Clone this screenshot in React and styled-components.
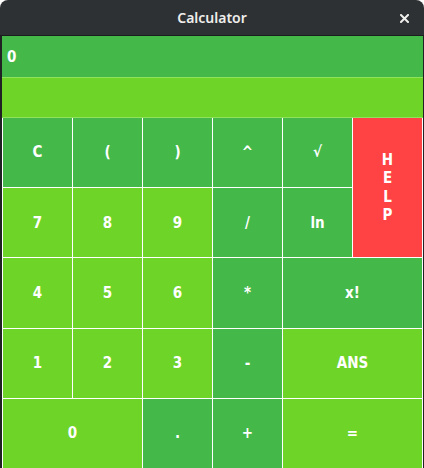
import React from 'react';
import styled, { createGlobalStyle } from 'styled-components';

const GlobalStyle = createGlobalStyle`
  html, body {
    margin: 0;
    padding: 0;
    background: #ffffff;
  }
`;

const DARK = '#44b94a';
const LIGHT = '#6fd428';
const RED = '#ff4244';

const Window = styled.div`
  width: 424px;
  height: 468px;
  display: flex;
  flex-direction: column;
  overflow: hidden;
  border-radius: 8px 8px 0 0;
  font-family: 'DejaVu Sans Condensed', 'DejaVu Sans', sans-serif;
`;

const TitleBar = styled.div`
  height: 35px;
  flex: none;
  background: #2e3134;
  border-bottom: 1px solid #1a1c1d;
  display: flex;
  align-items: center;
  justify-content: center;
  position: relative;
  color: #eeeeec;
  font-family: 'Noto Sans', 'DejaVu Sans', sans-serif;
  font-weight: 600;
  font-size: 14px;
`;

const CloseButton = styled.button`
  position: absolute;
  right: 15px;
  top: 14px;
  width: 9px;
  height: 9px;
  padding: 0;
  border: none;
  background: transparent;
  display: flex;
`;

const Body = styled.div`
  flex: 1;
  display: flex;
  flex-direction: column;
  border-left: 2px solid #1f2122;
  border-right: 1px solid #1f2122;
`;

const DisplayRow = styled.div`
  height: ${p => p.h}px;
  flex: none;
  background: ${p => p.bg};
  border-bottom: 1px solid #8fe35c;
  display: flex;
  align-items: center;
  padding-left: 5px;
  color: #ffffff;
  font-weight: 700;
  font-size: 15px;
`;

const Keypad = styled.div`
  flex: 1;
  display: grid;
  grid-template-columns: repeat(6, 1fr);
  grid-template-rows: repeat(5, 1fr);
  gap: 1px;
  padding: 0 1px;
  background: #ffffff;
`;

const Key = styled.button`
  border: none;
  margin: 0;
  padding: 0;
  background: ${p => p.bg};
  color: #ffffff;
  font-family: 'DejaVu Sans Condensed', 'DejaVu Sans', sans-serif;
  font-weight: 700;
  font-size: 15px;
  line-height: 18.5px;
  grid-column: span ${p => p.cols || 1};
  grid-row: span ${p => p.rows || 1};
  white-space: pre-line;
  display: flex;
  align-items: center;
  justify-content: center;
  cursor: pointer;
`;

const keys = [
  { l: 'C', bg: DARK }, { l: '(', bg: DARK }, { l: ')', bg: DARK },
  { l: '^', bg: DARK }, { l: '√', bg: DARK }, { l: 'H\nE\nL\nP', bg: RED, rows: 2 },
  { l: '7', bg: LIGHT }, { l: '8', bg: LIGHT }, { l: '9', bg: LIGHT },
  { l: '/', bg: DARK }, { l: 'ln', bg: DARK },
  { l: '4', bg: LIGHT }, { l: '5', bg: LIGHT }, { l: '6', bg: LIGHT },
  { l: '*', bg: DARK }, { l: 'x!', bg: DARK, cols: 2 },
  { l: '1', bg: LIGHT }, { l: '2', bg: LIGHT }, { l: '3', bg: LIGHT },
  { l: '-', bg: DARK }, { l: 'ANS', bg: LIGHT, cols: 2 },
  { l: '0', bg: LIGHT, cols: 2 }, { l: '.', bg: DARK },
  { l: '+', bg: DARK }, { l: '=', bg: LIGHT, cols: 2 },
];

export default function App() {
  return (
    <>
      <GlobalStyle />
      <Window>
        <TitleBar>
          Calculator
          <CloseButton aria-label="close">
            <svg width="9" height="9" viewBox="0 0 9 9">
              <path d="M1 1 L8 8 M8 1 L1 8" stroke="#eeeeec" strokeWidth="2" strokeLinecap="square" />
            </svg>
          </CloseButton>
        </TitleBar>
        <Body>
          <DisplayRow h={41} bg={DARK}>0</DisplayRow>
          <DisplayRow h={39} bg={LIGHT} />
          <Keypad>
            {keys.map((k, i) => (
              <Key key={i} bg={k.bg} cols={k.cols} rows={k.rows}>{k.l}</Key>
            ))}
          </Keypad>
        </Body>
      </Window>
    </>
  );
}
